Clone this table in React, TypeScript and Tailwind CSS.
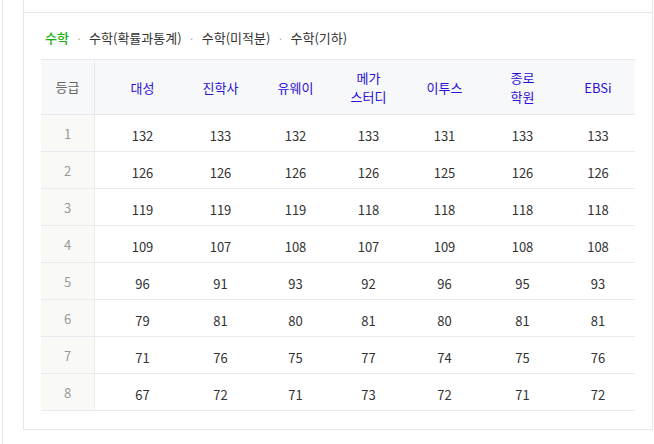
import React from 'react'

const companies = [
  { name: ['대성'], w: 'w-[87px] pl-[8px]' },
  { name: ['진학사'], w: 'w-[77px]' },
  { name: ['유웨이'], w: 'w-[73px]' },
  { name: ['메가', '스터디'], w: 'w-[73px]' },
  { name: ['이투스'], w: 'w-[79px]' },
  { name: ['종로', '학원'], w: 'w-[77px]' },
  { name: ['EBSi'], w: 'w-[74px]' },
]

const rows = [
  [132, 133, 132, 133, 131, 133, 133],
  [126, 126, 126, 126, 125, 126, 126],
  [119, 119, 119, 118, 118, 118, 118],
  [109, 107, 108, 107, 109, 108, 108],
  [96, 91, 93, 92, 96, 95, 93],
  [79, 81, 80, 81, 80, 81, 81],
  [71, 76, 75, 77, 74, 75, 76],
  [67, 72, 71, 73, 72, 71, 72],
]

const tabs = ['수학', '수학(확률과통계)', '수학(미적분)', '수학(기하)']

function App() {
  return (
    <div className="w-[654px] h-[444px] bg-white flex overflow-hidden font-['Noto_Sans_CJK_KR','Noto_Sans',sans-serif] text-[13px]">
      <div className="ml-[2px] h-full border-l border-[#e6e7eb]" />
      <div className="ml-[20px] w-[630px] h-[430px] border-x border-b border-[#e6e7eb] flex flex-col">
        <div className="h-[13px] border-b border-[#e6e7eb] shrink-0" />

        <div className="pl-[21px] mt-[15px] h-[20px] flex items-center leading-[20px] text-[#333]">
          {tabs.map((t, i) => (
            <React.Fragment key={t}>
              {i > 0 && <span className="mx-[7px] text-[#aaa] text-[11px]">·</span>}
              <span className={i === 0 ? 'text-[#16b012] font-medium' : ''}>{t}</span>
            </React.Fragment>
          ))}
        </div>

        <div className="ml-[17px] mt-[11px] w-[594px]">
          <div className="flex h-[56px] border-y border-[#e6e8ee] bg-[#f7f8fa]">
            <div className="w-[54px] border-r border-[#e6e8ee] flex items-center justify-center text-[#666]">등급</div>
            {companies.map(c => (
              <div key={c.name.join('')} className={`${c.w} flex flex-col items-center justify-center leading-[19px] text-[#2a0fd6]`}>
                {c.name.map(l => <span key={l}>{l}</span>)}
              </div>
            ))}
          </div>
          {rows.map((r, i) => (
            <div key={i} className="flex h-[37px] border-b border-[#e9eaef]">
              <div className="w-[54px] border-r border-[#e9eaef] bg-[#f9faf5] flex items-center justify-center text-[#999] pt-[2px]">{i + 1}</div>
              {r.map((v, j) => (
                <div key={j} className={`${companies[j].w} flex items-center justify-center text-[#333] pt-[6px]`}>{v}</div>
              ))}
            </div>
          ))}
        </div>
      </div>
    </div>
  )
}

export default App
